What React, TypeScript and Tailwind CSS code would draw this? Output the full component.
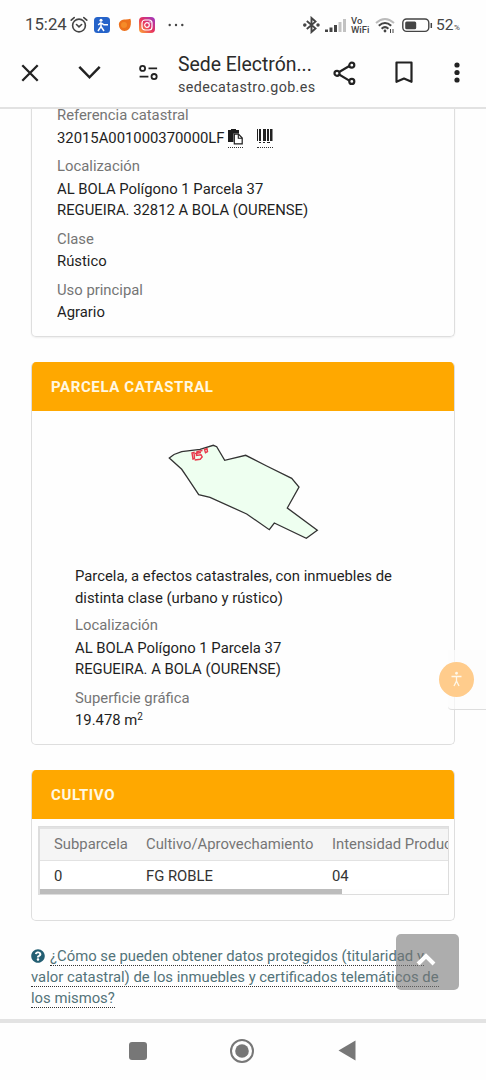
import React from "react";
import { FaQuestionCircle } from "react-icons/fa";

function StatusBar() {
  return (
    <div className="flex h-[50px] shrink-0 items-center pl-[25px] pr-[25px] text-[#444]">
      <span className="w-[42px] whitespace-nowrap text-[16.8px]">15:24</span>
      <svg className="ml-[3px]" width="18" height="18" viewBox="0 0 18 18" fill="none" stroke="#444" strokeWidth="1.6" strokeLinecap="round">
        <circle cx="9" cy="9.5" r="6.4" />
        <path d="M1.2 4.2 4.2 1.6M16.8 4.2 13.8 1.6M6.5 8.5 9 10.8l2.6-2.3" />
      </svg>
      <svg className="ml-[6px]" width="16" height="16" viewBox="0 0 16 16">
        <rect width="16" height="16" rx="3.5" fill="#2563c9" />
        <circle cx="7" cy="3.3" r="1.5" fill="#fff" />
        <path d="M7 5.5 4.2 8M7 5.5v4L4 14M7 9.5l3 4.5M7 5.8l3 2h4" stroke="#fff" strokeWidth="1.5" fill="none" />
      </svg>
      <svg className="ml-[8px]" width="14" height="14" viewBox="0 0 14 14">
        <path d="M.8 6Q1.5 2 6 1.4 10 1.6 12.4.8q.8 1.5.4 5.7Q12 13 6.5 13 1 12.5.8 6Z" fill="#ed711c" />
        <circle cx="6" cy="7" r="3" fill="#f58b29" />
      </svg>
      <svg className="ml-[7px]" width="16" height="16" viewBox="0 0 16 16">
        <defs>
          <linearGradient id="camera" x1="0" y1="1" x2="1" y2="0">
            <stop stopColor="#ffae35" />
            <stop offset=".5" stopColor="#e6325f" />
            <stop offset="1" stopColor="#9837c8" />
          </linearGradient>
        </defs>
        <rect width="16" height="16" rx="4" fill="url(#camera)" />
        <rect x="3" y="3" width="10" height="10" rx="3" fill="none" stroke="#fff" strokeWidth="1.2" />
        <circle cx="8" cy="8" r="2.3" fill="none" stroke="#fff" strokeWidth="1.2" />
        <circle cx="11" cy="5" r=".7" fill="#fff" />
      </svg>
      <svg className="ml-[13px]" width="16" height="4" viewBox="0 0 16 4" fill="#444">
        <circle cx="1.7" cy="2" r="1.2" /><circle cx="8" cy="2" r="1.2" /><circle cx="14.3" cy="2" r="1.2" />
      </svg>
      <svg className="ml-auto" width="17" height="18" viewBox="0 0 17 18" fill="none" stroke="#444" strokeWidth="1.9">
        <path d="m3.8 5 8.7 7.4L8.5 16V2l4 3.6L3.8 13" />
        <circle cx="1.8" cy="9" r=".8" fill="#444" /><circle cx="15" cy="9" r=".8" fill="#444" />
      </svg>
      <svg className="ml-[5px]" width="21" height="15" viewBox="0 0 21 15" fill="#444">
        <rect y="11.5" width="3" height="2.5" /><rect x="4.5" y="9.5" width="3" height="4.5" /><rect x="9" y="7" width="3" height="7" />
        <rect x="13.5" y="4" width="3" height="10" fill="#c2c2c2" /><rect x="18" y="1" width="3" height="13" fill="#c2c2c2" />
      </svg>
      <div className="ml-[5px] w-[19px] text-[9.5px] leading-[9px] font-medium whitespace-nowrap">
        <div>Vo</div><div>WiFi</div>
      </div>
      <svg className="ml-[5px]" width="21" height="17" viewBox="0 0 21 17" fill="none" stroke="#444" strokeWidth="2">
        <path d="M1 6Q10 -2 19 6" stroke="#bbb" />
        <path d="M3.8 8.8Q10 3.2 16.2 8.8M6.6 11.7Q10 8.5 13.4 11.7" />
        <circle cx="10" cy="14" r="1.4" fill="#444" stroke="none" />
        <path d="M15.5 12v4M18 12v4" strokeWidth="1" />
      </svg>
      <svg className="ml-[6px]" width="31" height="15" viewBox="0 0 31 15">
        <rect x=".8" y="1" width="26" height="12.4" rx="3.8" fill="none" stroke="#444" strokeWidth="1.4" />
        <rect x="3.2" y="3.4" width="11" height="7.8" rx="1.5" fill="#444" />
        <path d="M29.3 5v5" stroke="#444" strokeWidth="1.5" />
      </svg>
      <span className="mt-[2px] ml-[3px] w-[18px] text-[15.5px]">52</span>
      <span className="mt-[5px] w-[7px] text-[8px]">%</span>
    </div>
  );
}

function BrowserBar() {
  return (
    <div className="flex h-[59px] shrink-0 border-b-2 border-[#e2e2e2] text-[#2a2a2a]">
      <svg className="mt-[14px] ml-[21px] shrink-0" width="18" height="18" viewBox="0 0 18 18" stroke="#222" strokeWidth="2.3" fill="none"><path d="m1.3 1.3 15.4 15.4M16.7 1.3 1.3 16.7" /></svg>
      <svg className="mt-[15px] ml-[39px] shrink-0" width="23" height="15" viewBox="0 0 23 15" stroke="#222" strokeWidth="2.5" fill="none"><path d="m1.3 1.8 10.2 10.5L21.7 1.8" /></svg>
      <svg className="mt-[14px] ml-[38px] shrink-0" width="19" height="17" viewBox="0 0 19 17" stroke="#222" strokeWidth="1.8" fill="none">
        <circle cx="3.6" cy="4.4" r="2.5" /><path d="M9.5 4.4h8.6M.6 12.6h8.8" /><circle cx="15.1" cy="12.6" r="2.6" />
      </svg>
      <div className="ml-[20px] w-[140px] shrink-0 whitespace-nowrap">
        <div className="mt-[2px] text-[19.4px] leading-[25px]">Sede Electrón...</div>
        <div className="text-[14.3px] leading-[21px] tracking-[0.4px] text-[#444]">sedecatastro.gob.es</div>
      </div>
      <svg className="mt-[11px] ml-[15px] shrink-0" width="24" height="25" viewBox="0 0 24 25" stroke="#222" strokeWidth="2.2" fill="none">
        <path d="M18 4 4 12.3 18 20.6" /><g fill="#fff"><circle cx="18.8" cy="4.2" r="2.5" /><circle cx="4" cy="12.3" r="2.5" /><circle cx="18.8" cy="20.4" r="2.5" /></g>
      </svg>
      <svg className="mt-[11px] ml-[38px] shrink-0" width="18" height="23" viewBox="0 0 18 23" stroke="#222" strokeWidth="2.2" fill="none"><path d="M1.5 1.5h15v19.3L9 17.5l-7.5 3.3Z" strokeLinejoin="round" /></svg>
      <svg className="mt-[12px] ml-[41px] shrink-0" width="6" height="21" viewBox="0 0 6 21" fill="#222"><circle cx="3" cy="3" r="2.6" /><circle cx="3" cy="10.5" r="2.6" /><circle cx="3" cy="18" r="2.6" /></svg>
    </div>
  );
}

function Field({ label, children }: { label: string; children: React.ReactNode }) {
  return (
    <div className="mb-[7px] whitespace-nowrap">
      <div className="text-[#757575]">{label}</div>
      <div className="pt-[1px] text-[#1f1f1f]">{children}</div>
    </div>
  );
}

function CardHeader({ children }: { children: React.ReactNode }) {
  return <div className="flex h-[49px] shrink-0 items-center bg-[#ffa800] pt-[2px] pl-[19px] text-[15px] font-bold tracking-[0.6px] text-[#fff8e2]">{children}</div>;
}

function Parcel() {
  return (
    <svg className="mt-[31px] ml-[134px]" width="154" height="102" viewBox="0 0 154 102">
      <path d="M3.3 16 8 12.5 15.7 9.7 34 7.3 47.3 3.3l3.4 1.4 8 13.6 21-5 21 10.7 25 12.3 7.3 8.7L121.3 66l30 22.3-11 8L108.3 81l-5 6.7L80.7 72 44 55.3l-11.3-2.6-12-18-5-7.4Z" fill="#eefff0" stroke="#333" strokeWidth="1.3" />
      <g fill="none" stroke="#e8394b" strokeWidth="1.4"><path d="m26 11 2-.5.5 6-1.500.5ZM36.500 8.500 31 9.500l-.5 4 4.500-.8 1.200 2.300-2 2.300-5.500.7M29 11.500l6-1" /><path d="m38.5 7.5 2.500-.8.5 3-2 1Z" /></g>
    </svg>
  );
}

export default function App() {
  return (
    <div className="relative flex h-[1080px] w-[486px] flex-col overflow-hidden bg-[#fefefe] font-['Roboto',sans-serif] text-[14.83px] leading-[21.5px]">
      <StatusBar />
      <BrowserBar />
      <main className="h-[910px] shrink-0 overflow-hidden px-[31px]">
        <section className="mt-[-5px] h-[233px] w-[424px] rounded-b-[5px] border border-t-0 border-[#dedede] pt-[1px] pl-[25px] shadow-[0_1px_2px_#0001]">
          <Field label="Referencia catastral">
            <span className="flex">
              32015A001000370000LF
              <span className="ml-[3px] h-[20px] w-[15px] border-b border-dotted border-[#333] pt-[1px]">
                <svg width="15" height="16" viewBox="0 0 15 16">
                  <path d="M0 1h3V0h5v1h3v3.5H5.5V13H0Z" fill="#1c1c1c" />
                  <path d="M6.3 5.2h4.2l3.7 3.8v5.8H6.3Z" fill="#fff" stroke="#1c1c1c" strokeWidth="1.2" />
                  <path d="M10.3 5.2v4h3.9" fill="none" stroke="#1c1c1c" strokeWidth="1.1" />
                </svg>
              </span>
              <span className="ml-[14px] h-[20px] w-[16px] border-b border-dotted border-[#333] pt-[1px]">
                <svg width="16" height="17" viewBox="0 0 16 17" fill="#222"><path d="M0 0h1v12H0zM2 0h2v12H2zM6 0h3v12H6zM10 0h2v12h-2zM13 0h2.500v12h-2.500zM2 13h2v1H2zM6 13h2v1H6zM10 13h3v1h-3z" /></svg>
              </span>
            </span>
          </Field>
          <Field label="Localización">AL BOLA Polígono 1 Parcela 37<br />REGUEIRA. 32812 A BOLA (OURENSE)</Field>
          <Field label="Clase">Rústico</Field>
          <Field label="Uso principal">Agrario</Field>
        </section>

        <section className="mt-[25px] h-[383px] w-[424px] overflow-hidden rounded-[5px] border border-t-0 border-[#dedede]">
          <CardHeader>PARCELA CATASTRAL</CardHeader>
          <Parcel />
          <div className="mt-[22px] pl-[43px]">
            <div className="mb-[6px] whitespace-nowrap text-[#1f1f1f]">Parcela, a efectos catastrales, con inmuebles de<br />distinta clase (urbano y rústico)</div>
            <Field label="Localización">AL BOLA Polígono 1 Parcela 37<br />REGUEIRA. A BOLA (OURENSE)</Field>
            <Field label="Superficie gráfica">19.478 m<sup className="text-[10px]">2</sup></Field>
          </div>
        </section>

        <section className="mt-[25px] h-[151px] w-[424px] overflow-hidden rounded-[5px] border border-t-0 border-[#dedede]">
          <CardHeader>CULTIVO</CardHeader>
          <div className="mt-[7px] ml-[6px] h-[69px] w-[411px] overflow-hidden border border-[#ddd] border-l-2 whitespace-nowrap">
            <div className="grid h-[34px] w-[520px] grid-cols-[92px_186px_1fr] items-center border-t-2 border-b border-[#e2e2e2] bg-[#f5f5f5] pl-[14px] text-[#757575]">
              <span>Subparcela</span><span>Cultivo/Aprovechamiento</span><span>Intensidad Productiva</span>
            </div>
            <div className="grid h-[28px] w-[520px] grid-cols-[92px_186px_1fr] items-center bg-white pt-[3px] pl-[14px] text-[#333]">
              <span>0</span><span>FG ROBLE</span><span>04</span>
            </div>
            <div className="h-[5px] w-[302px] bg-[#bcbcbc]" />
          </div>
        </section>

        <div className="mt-[25px] whitespace-nowrap text-[#537379]">
          <div className="flex items-center">
            <FaQuestionCircle size={14} className="mr-[5px] text-[#245f73]" />
            <span className="h-[20px] border-b border-dotted border-[#333] leading-[21px]">¿Cómo se pueden obtener datos protegidos (titularidad y</span>
          </div>
          <div className="mt-[1px] flex h-[21px]"><span className="h-[20px] border-b border-dotted border-[#333] leading-[21px]">valor catastral) de los inmuebles y certificados telemáticos de</span></div>
          <div className="flex h-[21px]"><span className="h-[20px] border-b border-dotted border-[#333] leading-[21px]">los mismos?</span></div>
        </div>
      </main>

      <nav className="flex h-[61px] shrink-0 items-center border-t-[4px] border-[#e3e3e3] pb-[2px] pl-[129px]">
        <div className="h-[18px] w-[18px] rounded-[3px] bg-[#777]" />
        <svg className="ml-[82px]" width="26" height="26" viewBox="0 0 26 26"><circle cx="13" cy="13" r="11" fill="none" stroke="#777" strokeWidth="2" /><circle cx="13" cy="13" r="6.8" fill="#777" /></svg>
        <svg className="ml-[83px]" width="18" height="21" viewBox="0 0 18 21"><path d="M.5 10.500 17.500.500v20Z" fill="#777" /></svg>
      </nav>

      <div className="absolute top-[650px] right-0 h-[60px] w-[38px] rounded-bl border-b border-[#ddd] bg-[#fcfcfc]/70" />
      <div className="absolute top-[662px] left-[439px] flex h-[35px] w-[35px] items-center justify-center rounded-full bg-[#ffcc8c]">
        <svg width="13" height="17" viewBox="0 0 13 17" fill="none" stroke="#fff8e9" strokeWidth="1.3"><circle cx="6.5" cy="2.3" r=".8" fill="#fff8e9" /><path d="M1.500 5.500h10M6.500 5v5L4 15M6.500 10 9 15" /></svg>
      </div>
      <div className="absolute top-[934px] left-[396px] flex h-[56px] w-[63px] items-center justify-center rounded-[5px] bg-[#777]/60 pr-[3px] pb-[4px]">
        <svg width="20" height="14" viewBox="0 0 20 14" fill="none" stroke="#fff" strokeWidth="4"><path d="m2 11 8-8 8 8" /></svg>
      </div>
    </div>
  );
}
